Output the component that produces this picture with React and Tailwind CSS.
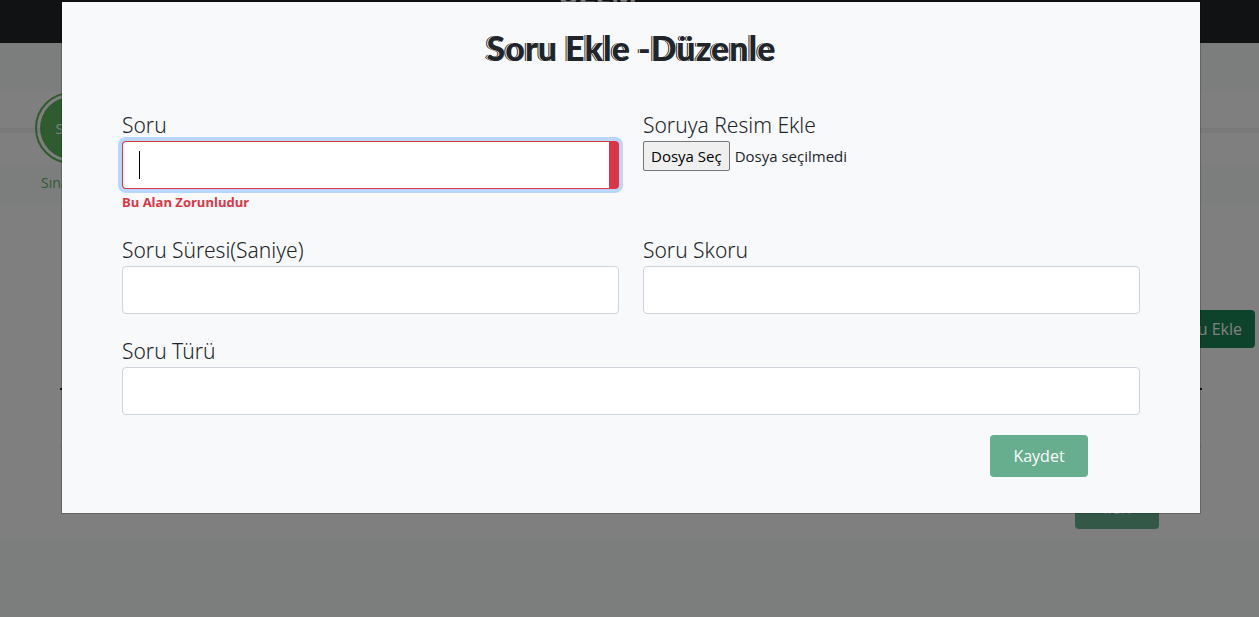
const fieldClass =
  "block h-12 w-full rounded border border-[#ced4da] bg-white px-4 text-xl text-[#212529] outline-none";
const labelClass =
  "block h-[31px] font-['Noto_Sans','Open_Sans',sans-serif] text-[21px] leading-[31px] font-light text-[#212529]";

function Field({ id, label, className = "", inputClass = "", caret = false, children, ...rest }) {
  return (
    <div className={className}>
      <label htmlFor={id} className={labelClass}>
        {label}
      </label>
      <div className="relative">
        <input id={id} type="text" className={`${fieldClass} ${inputClass}`} {...rest} />
        {caret && <span className="absolute top-2.5 left-[17px] h-7 w-px bg-black" aria-hidden="true" />}
      </div>
      {children}
    </div>
  );
}

function Background() {
  return (
    <div className="flex min-h-screen flex-col bg-[#f9fcfa]" aria-hidden="true">
      <header className="flex h-[43px] items-start justify-center overflow-hidden bg-[#212529] pr-16">
        <span className="-mt-[22px] text-[28px] leading-8 font-bold text-white">UZEM</span>
      </header>

      <div className="relative pt-12">
        <div className="h-[37px] bg-white" />
        <div className="h-[5px] bg-[#f3f3f3]" />
        <div className="h-8 bg-white" />
        <div className="h-10" />
        <div className="absolute top-[49px] left-[35px] flex flex-col items-start">
          <div className="flex size-[72px] items-center justify-center rounded-full border-2 border-[#5cb85c] p-[3px]">
            <div className="flex size-full items-center justify-center rounded-full bg-[#5cb85c] text-[15px] text-white">
              Step
            </div>
          </div>
          <span className="mt-2 pl-1.5 text-sm leading-[22px] whitespace-nowrap text-[#5cb85c]">Sınav Adı</span>
        </div>
      </div>

      <main className="flex h-[334px] flex-col bg-white pt-[105px]">
        <div className="flex justify-end pr-1">
          <button type="button" className="h-[38px] rounded bg-[#198754] px-[13px] text-base text-white">
            Soru Ekle
          </button>
        </div>
        <div className="mx-auto mt-10 w-full max-w-[1142px] translate-x-px border-t-2 border-[#212529]" />
        <div className="mx-auto mt-14 w-full max-w-[1142px] translate-x-px border-t border-[#dee2e6]" />
        <div className="mt-10 flex justify-end pr-[100px]">
          <button type="button" className="h-[42px] w-[84px] rounded bg-[#198754] text-base text-white opacity-65">
            İleri
          </button>
        </div>
      </main>
    </div>
  );
}

export default function App() {
  return (
    <div className="relative min-h-screen overflow-hidden font-['Open_Sans','Noto_Sans',sans-serif]">
      <Background />
      <div className="absolute inset-0 flex items-start justify-center bg-black/50 pt-px pl-[3px]">
        <div
          role="dialog"
          aria-modal="true"
          aria-labelledby="dialog-title"
          className="w-full max-w-[1140px] border border-black/20 bg-[#f8f9fb] bg-clip-padding px-[60px] pt-6 pb-9"
        >
          <h1
            id="dialog-title"
            className="text-center font-['Lato','Open_Sans',sans-serif] text-[34px] leading-[44px] font-black text-[#212529] [text-shadow:-1px_0_#f8f9fb,-2px_0_#212529]"
          >
            Soru Ekle -Düzenle
          </h1>

          <form className="mt-10 grid grid-cols-2 gap-x-6" onSubmit={(e) => e.preventDefault()}>
            <Field
              id="question"
              label="Soru"
              autoFocus
              caret
              aria-invalid="true"
              aria-describedby="question-error"
              inputClass="border-r-10 border-[#dc3545] caret-transparent ring-4 ring-[#bbd6fb]"
            >
              <p id="question-error" className="h-[46px] pt-1 text-[13px] leading-[18px] font-bold text-[#dc3545]">
                Bu Alan Zorunludur
              </p>
            </Field>

            <div>
              <label htmlFor="image" className={labelClass}>
                Soruya Resim Ekle
              </label>
              <div className="flex items-center gap-[5px] text-[15px] text-[#212529]">
                <input id="image" type="file" className="sr-only" tabIndex={-1} />
                <button
                  type="button"
                  onClick={() => document.getElementById("image").click()}
                  className="h-[30px] rounded-xs border border-[#767676] bg-[#efefef] px-[7px] text-black"
                >
                  Dosya Seç
                </button>
                <span>Dosya seçilmedi</span>
              </div>
            </div>

            <Field id="duration" label="Soru Süresi(Saniye)" />
            <Field id="score" label="Soru Skoru" />
            <Field id="kind" label="Soru Türü" className="col-span-2 mt-[22px]" />

            <div className="col-span-2 mt-5 flex justify-end pr-[52px]">
              <button
                type="submit"
                disabled
                className="h-[42px] w-[98px] rounded bg-[#198754] text-base text-white opacity-65"
              >
                Kaydet
              </button>
            </div>
          </form>
        </div>
      </div>
    </div>
  );
}
